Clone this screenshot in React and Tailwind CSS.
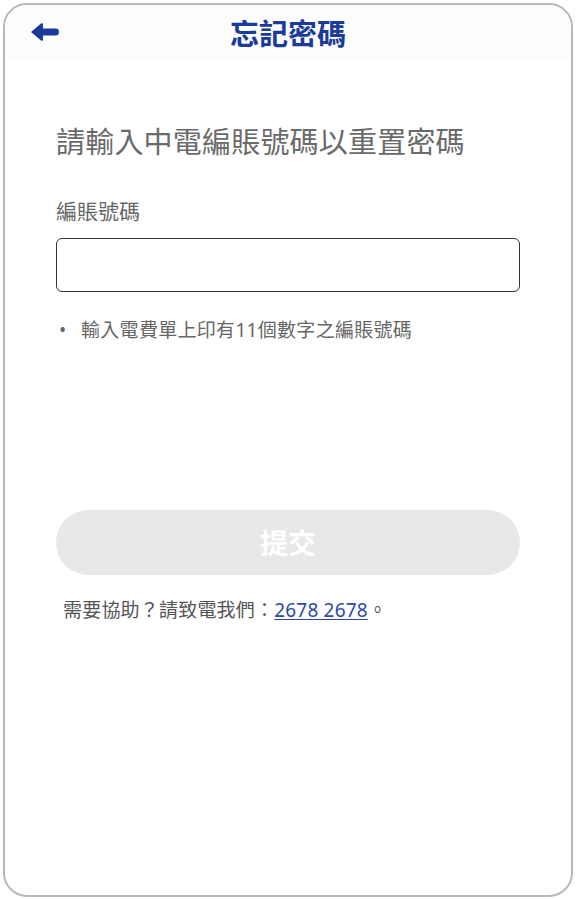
const FONT = { fontFamily: '"Noto Sans", "Noto Sans CJK TC", sans-serif' }

function BackArrow() {
  return (
    <svg width="30" height="20" viewBox="0 0 30 20" aria-hidden="true">
      <path
        d="M1 10 L11 1.5 C12 0.8 13 1.3 13 2.5 L13 6.5 L26 6.5 C27.8 6.5 29 7.9 29 10 C29 12.1 27.8 13.5 26 13.5 L13 13.5 L13 17.5 C13 18.7 12 19.2 11 18.5 Z"
        fill="#1a3a9c"
      />
    </svg>
  )
}

export default function App() {
  return (
    <div className="h-[900px] w-[576px] bg-white p-[3px]" style={FONT}>
      <div className="flex h-full flex-col overflow-hidden rounded-[24px] border-2 border-[#b8b8b8] bg-white">
        <header className="relative flex h-[56px] items-center justify-center bg-[#fdfdfd]">
          <button className="absolute left-[25px] top-[17px]" aria-label="返回">
            <BackArrow />
          </button>
          <h1 className="text-[29px] font-bold leading-none text-[#1a3a9c]">忘記密碼</h1>
        </header>

        <main className="flex flex-col px-[51px] pt-[61px]">
          <h2 className="text-[29px] leading-[40px] tracking-[0.2px] text-[#6a6a6a]">請輸入中電編賬號碼以重置密碼</h2>

          <label className="mt-[34px] text-[21px] leading-[30px] text-[#666666]">編賬號碼</label>
          <input
            type="text"
            className="mt-[12px] h-[54px] w-full rounded-[6px] border-[1.5px] border-[#333333] px-3 text-[20px] outline-none"
          />

          <ul className="mt-[24px] text-[19px] leading-[28px] tracking-[0.3px] text-[#666666]">
            <li className="flex">
              <span className="w-[25px] pl-[3px]">•</span>
              <span>輸入電費單上印有11個數字之編賬號碼</span>
            </li>
          </ul>

          <button
            disabled
            className="mt-[166px] h-[65px] w-full rounded-full bg-[#e8e8e8] text-[28px] font-bold text-white"
          >
            提交
          </button>

          <p className="mt-[21px] pl-[7px] text-[19px] leading-[28px] tracking-[0.2px] text-[#555555]">
            需要協助？請致電我們：
            <a href="tel:26782678" className="text-[#2a4aa5] underline underline-offset-2">
              2678 2678
            </a>
            。
          </p>
        </main>
      </div>
    </div>
  )
}
